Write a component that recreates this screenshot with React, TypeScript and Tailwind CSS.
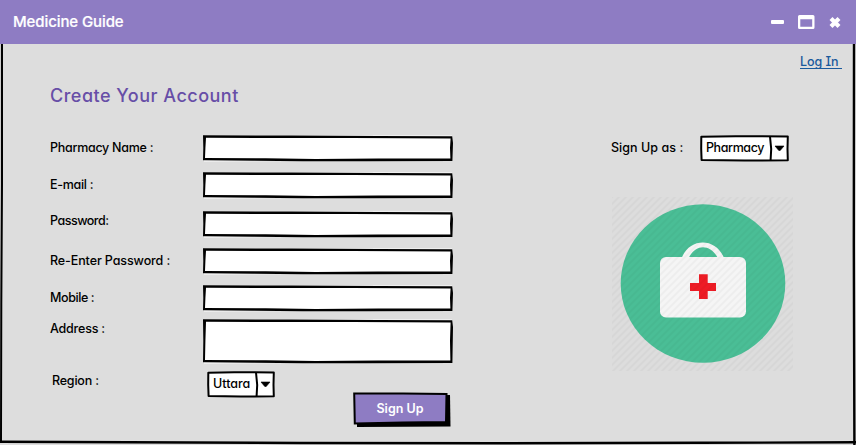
import React from "react";

const FONT = "font-['Inter','Liberation_Sans',sans-serif] [font-feature-settings:'cv11']";

/* Hand-drawn rectangle that fills its parent field. */
function SketchFrame({ w, h }: { w: number; h: number }) {
  return (
    <svg className="absolute inset-0" width={w} height={h + 1} viewBox={`0 0 ${w} ${h + 1}`} aria-hidden="true">
      <path d={`M1 ${h + 0.6} L2 .5 H${w - 1} V${h - 1} L${w * 0.2} ${h + 0.3} Z`} fill="#fff" />
      <path
        d={`M0 .2 L${w * 0.35} .6 L${w * 0.7} 1 L${w - 0.8} 1.3 L${w} 8 L${w - 0.6} ${h} L${w * 0.65} ${h + 0.3} L${w * 0.4} ${h + 0.3} L${w * 0.2} ${h - 0.3} L0 ${h - 0.8} L.3 ${h * 0.5} Z
        M3 2.8 L2.4 ${h * 0.5} L2 ${h - 3} L${w * 0.25} ${h - 2.8} L${w * 0.45} ${h - 1.9} L${w * 0.7} ${h - 2.4} L${w - 2.6} ${h - 2.6} L${w - 3} ${h * 0.5} L${w - 2.4} 3.5 L${w * 0.6} 3 L${w * 0.4} 3.1 Z`}
        fill="#000"
        fillRule="evenodd"
      />
    </svg>
  );
}

function Field({ label, rowClass, labelClass, h = 26 }: { label: string; rowClass: string; labelClass: string; h?: number }) {
  return (
    <div className={`flex ${rowClass}`}>
      <label className={`w-[153px] whitespace-pre ${labelClass}`}>{label}</label>
      <div className="relative w-[250px]">
        <SketchFrame w={250} h={h} />
      </div>
    </div>
  );
}

function SketchSelect({ text, w, divider, className, textClass }: { text: string; w: number; divider: number; className: string; textClass: string }) {
  return (
    <div className={`relative h-[27px] ${className}`}>
      <svg className="absolute inset-0" width={w} height="27" aria-hidden="true">
        <path
          d={`M1.3 1.8 L${w * 0.4} 1.3 L${w - 1.2} 1.4 L${w - 1.5} 14 L${w - 1.2} 25.3 L${w * 0.5} 25.5 L1.6 25 L1.2 14 Z`}
          fill="#fff"
          stroke="#000"
          strokeWidth="2"
          strokeLinejoin="round"
        />
        <path d={`M${divider} 1.5 L${divider + 1.2} 14 L${divider + 0.6} 25`} fill="none" stroke="#000" strokeWidth="2" />
        <path d={`M${divider + 5} 11 H${divider + 14} L${divider + 10.2} 15.5 H${divider + 8.8} Z`} fill="#000" stroke="#000" strokeWidth=".6" strokeLinejoin="round" />
      </svg>
      <span className={`relative block pl-[6px] pt-[3px] ${textClass}`}>{text}</span>
    </div>
  );
}

function FirstAid() {
  return (
    <svg width="182" height="175" viewBox="0 0 182 175" aria-label="First aid kit">
      <defs>
        <pattern id="hatch" width="7" height="7" patternUnits="userSpaceOnUse">
          <path d="M-1 1 L1 -1 M0 7 L7 0 M6 8 L8 6" stroke="#000" strokeOpacity=".032" strokeWidth="1.7" />
        </pattern>
      </defs>
      <ellipse cx="91" cy="86.5" rx="82.3" ry="79.3" fill="#4abe96" />
      <path d="M69.5 61.5 C77 40 104.5 40 112.2 61.5 H106 C99 46.5 83 46.5 76.5 61.5 Z" fill="#f5f5f5" />
      <rect x="48" y="60" width="86" height="60.5" rx="6" fill="#f5f5f5" />
      <path d="M87 77.3 H95.7 V86 H104 V94 H95.7 V102 H87 V94 H78 V86 H87 Z" fill="#ee1c25" />
      <rect width="181" height="174" fill="url(#hatch)" />
    </svg>
  );
}

function TitleBar() {
  return (
    <header className="flex h-[44px] items-center justify-between bg-[#8e7cc3] pl-[13px] pr-[13px] text-white">
      <h1 className="text-[15px] font-medium leading-[20px] tracking-[-0.1px] [-webkit-text-stroke:0.2px_white]">Medicine Guide</h1>
      <svg width="72" height="16" viewBox="0 0 72 16" aria-hidden="true">
        <rect x="0" y="6" width="13" height="4" rx="1" fill="#fff" />
        <path fillRule="evenodd" d="M28.5 1 H42 Q43.5 1 43.5 2.5 V13.5 Q43.5 15 42 15 H28.5 Q27 15 27 13.5 V2.5 Q27 1 28.5 1 Z M29.3 5.3 V12.7 H41.2 V5.3 Z" fill="#fff" />
        <path d="M60 4.5 L68 12.5 M68 4.5 L60 12.5" stroke="#fff" strokeWidth="4.2" />
      </svg>
    </header>
  );
}

export default function App() {
  return (
    <div className={`relative h-[445px] w-[856px] overflow-hidden bg-[#ddd] text-[12.5px] font-medium leading-[20px] text-black ${FONT}`}>
      <TitleBar />
      <main className="flex h-[401px] justify-between pl-[50px]">
        <section>
          <h2 className="mt-[40px] text-[18px] font-medium leading-[24px] tracking-[0.5px] text-[#674ea7]">Create Your Account</h2>
          <form className="mt-[27px]">
            <Field label="Pharmacy Name :" rowClass="h-[26px]" labelClass="pt-[3px] tracking-[-0.28px]" />
            <Field label="E-mail :" rowClass="mt-[11px] h-[26px]" labelClass="pt-[3px] tracking-[-0.3px]" />
            <Field label="Password:" rowClass="mt-[13px] h-[26px]" labelClass="tracking-[-0.5px]" />
            <Field label="Re-Enter Password :" rowClass="mt-[11px] h-[26px]" labelClass="pt-[3px] tracking-[-0.1px]" />
            <Field label="Mobile :" rowClass="mt-[11px] h-[26px]" labelClass="pt-[3px] tracking-[-0.4px]" />
            <Field label="Address :" rowClass="mt-[8px] h-[45px]" labelClass="tracking-[-0.2px]" h={44} />
            <div className="mt-[7px] flex">
              <span className="w-[157px] pl-[2px] tracking-[-0.2px]">Region :</span>
              <SketchSelect text="Uttara" w={68} divider={49} className="w-[68px]" textClass="tracking-[0px]" />
            </div>
            <button type="button" className="relative ml-[303px] -mt-[6px] block h-[36px] w-[98px]">
              <svg className="absolute inset-0" width="98" height="36" aria-hidden="true">
                <path d="M4 4 L97 3 L97.5 34.5 L4 35 Z" fill="#000" />
                <path d="M1.2 1.5 L50 1.4 L93.5 2 L93 30 L50 30.5 L1.8 31.5 Z" fill="#8e7cc3" stroke="#000" strokeWidth="2" />
              </svg>
              <span className="relative block h-[33px] pr-[4px] pt-[5px] text-center font-semibold tracking-[0px] text-white">Sign Up</span>
            </button>
          </form>
        </section>
        <aside className="w-[245px]">
          <a className="ml-[189px] mt-[9px] block h-[16px] w-[42px] border-b border-[#1a5a9c] leading-[17px] tracking-[-0.05px] text-[#1a5a9c] [font-feature-settings:'cv08','cv11']">Log In</a>
          <div className="mt-[66px] flex">
            <span className="w-[89px] pt-[3px] tracking-[0.05px]">Sign Up as :</span>
            <SketchSelect text="Pharmacy" w={89} divider={70} className="w-[89px]" textClass="tracking-[-0.4px]" />
          </div>
          <div className="ml-px mt-[35px]">
            <FirstAid />
          </div>
        </aside>
      </main>
      <svg className="pointer-events-none absolute left-0 top-[44px]" width="856" height="401" aria-hidden="true">
        <path d="M0 0 V397" stroke="#bbb" strokeWidth="1" />
        <path d="M2 0 L2 140 L1.3 260 L1 397" fill="none" stroke="#000" strokeWidth="2" />
        <path d="M0 397.8 L300 399 L500 399.3 L700 398.8 L856 398.3" fill="none" stroke="#000" strokeWidth="2.4" />
        <path d="M854 0 L853.8 200 L854.4 401" fill="none" stroke="#000" strokeWidth="2.4" />
      </svg>
    </div>
  );
}
